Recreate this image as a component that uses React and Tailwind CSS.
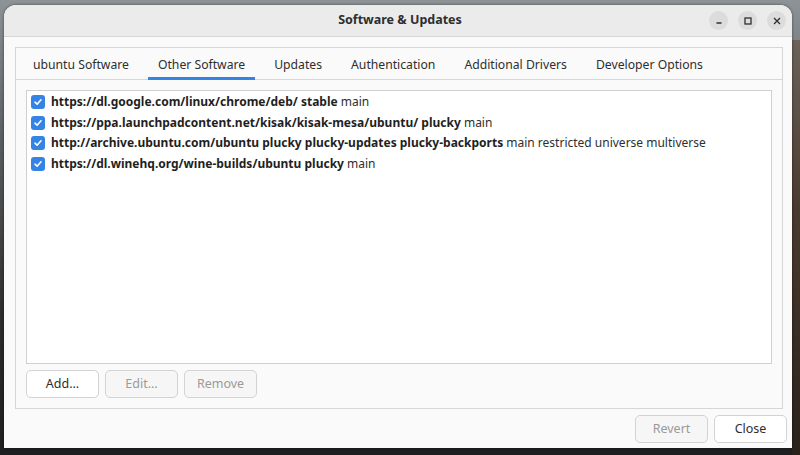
import React from 'react';

const tabs = [
  'ubuntu Software',
  'Other Software',
  'Updates',
  'Authentication',
  'Additional Drivers',
  'Developer Options',
];

const sources = [
  { url: 'https://dl.google.com/linux/chrome/deb/ stable', rest: 'main' },
  { url: 'https://ppa.launchpadcontent.net/kisak/kisak-mesa/ubuntu/ plucky', rest: 'main' },
  {
    url: 'http://archive.ubuntu.com/ubuntu plucky plucky-updates plucky-backports',
    rest: 'main restricted universe multiverse',
  },
  { url: 'https://dl.winehq.org/wine-builds/ubuntu plucky', rest: 'main' },
];

const Check = () => (
  <span className="w-[14px] h-[14px] rounded-[3px] bg-[#3584e4] flex items-center justify-center shrink-0">
    <svg width="10" height="10" viewBox="0 0 10 10">
      <path d="M2 5.2 L4.1 7.2 L8 2.8" fill="none" stroke="#fff" strokeWidth="1.6" strokeLinecap="round" strokeLinejoin="round" />
    </svg>
  </span>
);

const Button = ({ children, disabled }) => (
  <button
    className={
      'w-[73px] h-[28px] rounded-[5px] border border-[#d3d3d3] text-[12.5px] ' +
      (disabled ? 'bg-[#f6f6f6] text-[#9a9a9a]' : 'bg-white text-[#2e2e2e]')
    }
  >
    {children}
  </button>
);

const WinButton = ({ children }) => (
  <div className="w-[19px] h-[19px] rounded-full bg-[#dcdcdc] flex items-center justify-center">{children}</div>
);

export default function App() {
  return (
    <div
      className="w-[800px] h-[455px] overflow-hidden pt-[5px] pl-[4px]"
      style={{ fontFamily: '"Noto Sans", "Open Sans", sans-serif' }}
    >
      {/* desktop backdrop */}
      <div className="absolute inset-0 w-[800px] h-[455px] bg-[linear-gradient(180deg,#8d9396_0%,#5b6064_30%,#2d2c2a_70%,#1e1f20_100%)] -z-10" />
      <div className="absolute top-[40px] left-[792px] w-[8px] h-[415px] bg-[linear-gradient(180deg,#6b625a_0%,#4a3b30_40%,#2a211b_100%)] -z-10" />

      {/* window */}
      <div className="w-[788px] h-[443px] rounded-t-[12px] overflow-hidden flex flex-col bg-[#fafafa] shadow-[0_0_3px_rgba(0,0,0,0.5)]">
        {/* header bar */}
        <div className="h-[32px] shrink-0 bg-[#ebebeb] border-b border-[#d6d6d6] flex items-center relative">
          <div className="flex-1 text-center text-[12.5px] font-bold text-[#2e2e2e] pl-[4px]">Software &amp; Updates</div>
          <div className="absolute right-[6px] top-[6px] flex gap-[10px]">
            <WinButton>
              <svg width="10" height="10" viewBox="0 0 10 10">
                <path d="M2.5 7 H7.5" stroke="#2e2e2e" strokeWidth="1.3" />
              </svg>
            </WinButton>
            <WinButton>
              <svg width="10" height="10" viewBox="0 0 10 10">
                <rect x="2" y="2" width="6" height="6" fill="none" stroke="#2e2e2e" strokeWidth="1.3" />
              </svg>
            </WinButton>
            <WinButton>
              <svg width="10" height="10" viewBox="0 0 10 10">
                <path d="M2 2 L8 8 M8 2 L2 8" stroke="#2e2e2e" strokeWidth="1.3" />
              </svg>
            </WinButton>
          </div>
        </div>

        {/* body */}
        <div className="flex-1 flex flex-col pt-[10px] pl-[11px] pr-[9px]">
          <div className="h-[362px] border border-[#d6d6d6] bg-[#fafafa] flex flex-col">
            <div className="h-[32px] shrink-0 border-b border-[#d6d6d6] flex pl-[7px] gap-[9px] text-[12.2px] text-[#2e2e2e]">
              {tabs.map((t, i) => (
                <div
                  key={t}
                  className={
                    'px-[10px] flex items-center border-b-[3px] -mb-[1px] pt-[5px] ' +
                    (i === 1 ? 'border-[#3584e4]' : 'border-transparent')
                  }
                >
                  {t}
                </div>
              ))}
            </div>

            <div className="flex-1 flex flex-col pt-[10px] px-[10px] pb-[10px]">
              <div className="flex-1 bg-white border border-[#d0d0d0] pt-[1px] pl-[4px]">
                {sources.map((s) => (
                  <div key={s.url} className="h-[20.6px] flex items-center gap-[6px] text-[12px] text-[#2e2e2e] whitespace-nowrap">
                    <Check />
                    <span>
                      <span className="font-bold text-[#1f1f1f]">{s.url}</span> {s.rest}
                    </span>
                  </div>
                ))}
              </div>
              <div className="flex gap-[6px] mt-[6px]">
                <Button>Add...</Button>
                <Button disabled>Edit...</Button>
                <Button disabled>Remove</Button>
              </div>
            </div>
          </div>
        </div>

        {/* dialog buttons */}
        <div className="h-[41px] shrink-0 flex justify-end items-start pt-[6px] pr-[5px] gap-[6px]">
          <Button disabled>Revert</Button>
          <Button>Close</Button>
        </div>
      </div>
    </div>
  );
}
